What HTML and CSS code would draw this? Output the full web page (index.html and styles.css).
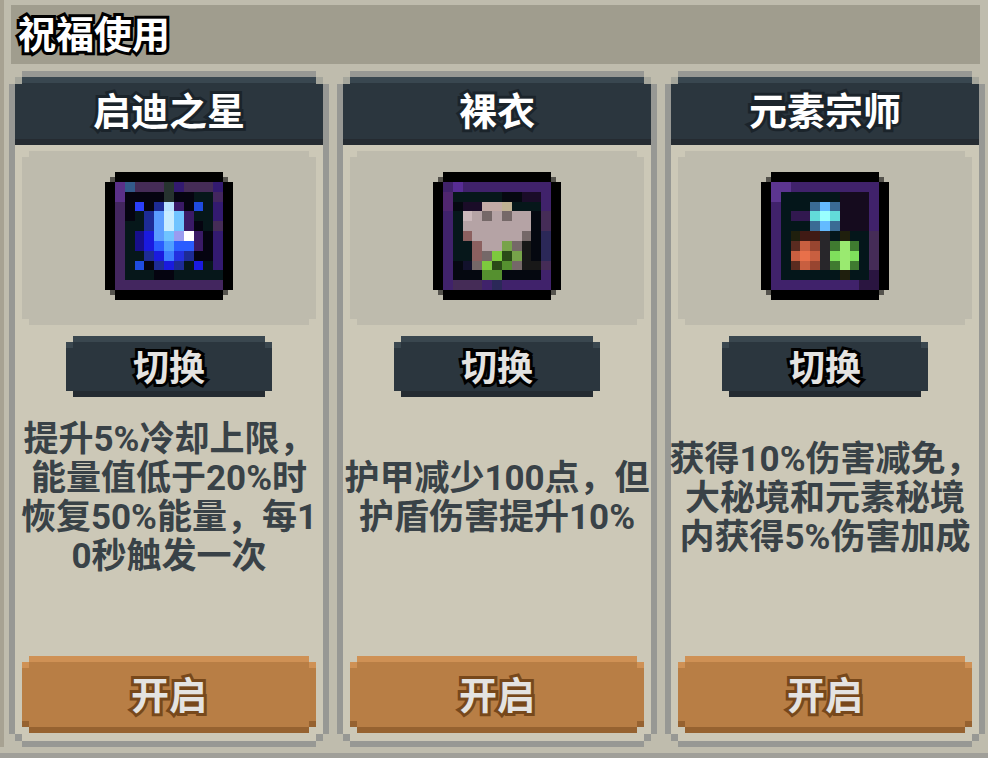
FILE: index.html
```html
<!DOCTYPE html>
<html lang="zh-CN">

<head>
	<meta charset="UTF-8">
	<meta name="viewport" content="width=device-width, initial-scale=1.0">
	<title>祝福使用</title>
	<link rel="stylesheet" href="styles.css">
</head>

<body>
	<main class="window">
		<div class="panel">
			<h1 class="panel-title">祝福使用</h1>

			<div class="cards">
				<section class="card">
					<h2 class="card-title">启迪之星</h2>
					<div class="card-icon">
						<svg viewBox="0 0 13 13" shape-rendering="crispEdges" aria-hidden="true">
							<path fill="#55534d" d="M.5.5h12v12H.5z"/>
							<path fill="#000" d="M1 0h11v1h1v11h-1v1H1v-1H0V1h1z"/>
							<path fill="#43265f" d="M1 1h11v11H1z"/>
							<path fill="#06171a" d="M2 2h9v9H2z"/>
							<path fill="#5a3088" d="M1 1h1v2H1z"/>
							<path fill="#335a8a" d="M2 1h1v1H2z"/>
							<path fill="#452c57" d="M3 1h3v1H3zM8 1h3v1H8zM11 5h1v1h-1z"/>
							<path fill="#26332f" d="M6 1h1v2H6z"/>
							<path fill="#331a70" d="M7 1h1v1H7zM11 1h1v1h-1zM11 3h1v2h-1zM11 6h1v4h-1z"/>
							<path fill="#050410" d="M2 2h4v1H2zM2 3h1v2H2zM4 3h1v1H4zM7 2h2v1H7zM8 3h1v1H8zM9 5h1v1H9zM10 6h1v3h-1zM9 8h1v1H9zM5 10h2v1H5zM4 9h1v1H4z"/>
							<path fill="#06171a" d="M11 10h1v1h-1z"/>
							<path fill="#2b3ffa" d="M3 3h1v1H3z"/>
							<path fill="#1f4be0" d="M9 3h1v1H9zM3 9h1v1H3z"/>
							<path fill="#1d2b95" d="M5 3h1v1H5zM4 4h1v2H4zM4 8h1v1H4zM8 8h1v1H8zM5 9h1v1H5zM7 9h1v1H7z"/>
							<path fill="#b8e2ff" d="M6 3h1v1H6z"/>
							<path fill="#c8ecff" d="M6 4h1v2H6z"/>
							<path fill="#3a1a66" d="M7 3h1v1H7zM8 4h1v2H8zM9 6h1v2H9z"/>
							<path fill="#5b9cff" d="M5 4h1v3H5z"/>
							<path fill="#6fc4ff" d="M7 4h1v2H7zM6 6h1v1H6z"/>
							<path fill="#170f8c" d="M3 6h1v2H3z"/>
							<path fill="#1a1adf" d="M4 6h1v2H4zM5 8h1v1H5zM6 9h1v1H6zM9 9h1v1H9z"/>
							<path fill="#9a9cf0" d="M7 6h1v1H7z"/>
							<path fill="#fff" d="M8 6h1v1H8z"/>
							<path fill="#2a5cff" d="M5 7h1v1H5zM7 7h2v1H7z"/>
							<path fill="#4fa0ff" d="M6 7h1v1H6z"/>
							<path fill="#3d80ff" d="M6 8h1v1H6z"/>
							<path fill="#2330e0" d="M7 8h1v1H7z"/>
						</svg>
					</div>
					<button class="btn btn-switch" type="button">切换</button>
					<p class="card-text">提升5%冷却上限，<br>能量值低于20%时<br>恢复50%能量，每1<br>0秒触发一次</p>
					<button class="btn btn-open" type="button">开启</button>
				</section>

				<section class="card">
					<h2 class="card-title">裸衣</h2>
					<div class="card-icon">
						<svg viewBox="0 0 13 13" shape-rendering="crispEdges" aria-hidden="true">
							<path fill="#55534d" d="M.5.5h12v12H.5z"/>
							<path fill="#000" d="M1 0h11v1h1v11h-1v1H1v-1H0V1h1z"/>
							<path fill="#40226b" d="M1 1h11v11H1z"/>
							<path fill="#050810" d="M2 2h9v9H2z"/>
							<path fill="#572c94" d="M2 1h1v1H2z"/>
							<path fill="#50266f" d="M1 2h1v2H1z"/>
							<path fill="#452c57" d="M11 4h1v2h-1zM2 11h3v1H2zM11 9h1v1h-1z"/>
							<path fill="#2b2858" d="M11 6h1v3h-1zM6 11h1v1H6z"/>
							<path fill="#06171a" d="M2 2h5v1H2zM2 4h1v5H2zM3 7h1v2H3zM8 3h3v1H8z"/>
							<path fill="#1a0c28" d="M3 3h2v1H3zM9 2h2v1H9z"/>
							<path fill="#181818" d="M9 7h1v3H9zM10 9h1v1h-1z"/>
							<path fill="#12112c" d="M3 9h1v1H3z"/>
							<path fill="#b5a3a5" d="M3 4h7v2H3zM4 6h5v1H4zM5 7h2v1H5z"/>
							<path fill="#c3aba6" d="M5 3h2v1H5z"/>
							<path fill="#c0b193" d="M7 3h1v1H7z"/>
							<path fill="#cbb8bb" d="M3 4h1v1H3z"/>
							<path fill="#756868" d="M5 4h1v1H5zM7 4h1v1H7zM9 6h1v1H9zM8 7h1v1H8zM5 8h1v1H5zM4 9h1v1H4zM8 9h1v1H8z"/>
							<path fill="#8b605f" d="M3 6h1v1H3zM4 7h1v2H4z"/>
							<path fill="#77a34a" d="M7 7h1v1H7zM8 8h1v1H8z"/>
							<path fill="#7dca3d" d="M6 8h1v1H6zM5 9h1v1H5z"/>
							<path fill="#2a4a18" d="M7 8h1v1H7zM6 9h1v1H6z"/>
							<path fill="#55902f" d="M7 9h1v1H7zM5 10h2v1H5z"/>
						</svg>
					</div>
					<button class="btn btn-switch" type="button">切换</button>
					<p class="card-text">护甲减少100点，但<br>护盾伤害提升10%</p>
					<button class="btn btn-open" type="button">开启</button>
				</section>

				<section class="card">
					<h2 class="card-title">元素宗师</h2>
					<div class="card-icon">
						<svg viewBox="0 0 13 13" shape-rendering="crispEdges" aria-hidden="true">
							<path fill="#55534d" d="M.5.5h12v12H.5z"/>
							<path fill="#000" d="M1 0h11v1h1v11h-1v1H1v-1H0V1h1z"/>
							<path fill="#40226b" d="M1 1h11v11H1z"/>
							<path fill="#04161a" d="M2 2h9v9H2z"/>
							<path fill="#5c3590" d="M1 1h2v1H2v1H1z"/>
							<path fill="#452c57" d="M11 6h1v4h-1z"/>
							<path fill="#2a1540" d="M11 10h1v1h-1zM10 11h2v1h-2z"/>
							<path fill="#150b1e" d="M8 2h3v4H8z"/>
							<path fill="#31184f" d="M3 4h2v1H3z"/>
							<path fill="#3a6b94" d="M5 3h3v3H5z"/>
							<path fill="#63bbff" d="M6 3h1v3H6z"/>
							<path fill="#62dcd9" d="M5 4h3v1H5z"/>
							<path fill="#99ffff" d="M6 4h1v1H6z"/>
							<path fill="#401a14" d="M4 6h2v1H4z"/>
							<path fill="#1f1f0d" d="M3 6h1v1H3zM8 6h1v1H8zM8 10h1v1H8z"/>
							<path fill="#28262a" d="M6 6h1v4H6z"/>
							<path fill="#5a2b20" d="M3 7h1v3H3z"/>
							<path fill="#984530" d="M5 7h1v3H5z"/>
							<path fill="#c85f40" d="M4 7h1v3H4zM3 8h3v1H3z"/>
							<path fill="#e8704a" d="M4 8h1v1H4z"/>
							<path fill="#3f7a30" d="M7 7h3v3H7z"/>
							<path fill="#7fe05c" d="M7 8h3v1H7z"/>
							<path fill="#9aea70" d="M8 7h1v3H8z"/>
						</svg>
					</div>
					<button class="btn btn-switch" type="button">切换</button>
					<p class="card-text">获得10%伤害减免，<br>大秘境和元素秘境<br>内获得5%伤害加成</p>
					<button class="btn btn-open" type="button">开启</button>
				</section>
			</div>
		</div>
	</main>
</body>

</html>
```
FILE: styles.css
```css
* {
	box-sizing: border-box;
}

body {
	margin: 0;
	background-color: #bfbcad;
	font-family: Roboto, "Noto Sans CJK SC", sans-serif;
	font-weight: 700;
}

h1,
h2,
p {
	margin: 0;
}

.window {
	padding-bottom: 6px;
	border-bottom: 5px solid #a09f99;
}

.panel {
	padding: 5px 3px 0 5px;
	border-left: 4px solid #a7a292;
}

.panel-title {
	margin: 0 5px 7px 2px;
	padding: 2px 0 0 7px;
	background-color: #a09d8e;
	color: #fff;
	font-size: 38px;
	line-height: 57px;
	-webkit-text-stroke: 6px #000;
	paint-order: stroke fill;
}

.cards {
	display: grid;
	grid-template-columns: repeat(3, minmax(0, 1fr));
	gap: 8px;
}

/* stepped pixel border: four bars, then the corner squares */
.card {
	display: flex;
	flex-direction: column;
	align-items: center;
	padding: 6px 6px 14px;
	background:
		linear-gradient(#979894, #979894) top / calc(100% - 26px) 6px,
		linear-gradient(#979894, #979894) bottom / calc(100% - 26px) 6px,
		linear-gradient(#979894, #979894) left / 6px calc(100% - 26px),
		linear-gradient(#979894, #979894) right / 6px calc(100% - 26px),
		linear-gradient(#979894, #979894) left 6px bottom 6px / 7px 7px,
		linear-gradient(#979894, #979894) right 6px bottom 6px / 7px 7px,
		linear-gradient(#a5a69c, #a5a69c) left 6px top 6px / 7px 7px,
		linear-gradient(#a5a69c, #a5a69c) right 6px top 6px / 7px 7px,
		linear-gradient(#ccc8b7, #ccc8b7) center / calc(100% - 12px) calc(100% - 12px);
	background-repeat: no-repeat;
}

.card-title {
	width: 100%;
	height: 68px;
	background: linear-gradient(#394750 6px, #2b363e 6px 62px, #252b31 62px);
	clip-path: polygon(7px 0, calc(100% - 7px) 0, calc(100% - 7px) 7px, 100% 7px, 100% 100%, 0 100%, 0 7px, 7px 7px);
	color: #fff;
	font-size: 38px;
	line-height: 70px;
	text-align: center;
	-webkit-text-stroke: 6px #1b242b;
	paint-order: stroke fill;
}

.card-icon,
.btn {
	clip-path: polygon(7px 0, calc(100% - 7px) 0, calc(100% - 7px) 6px, 100% 6px, 100% calc(100% - 6px), calc(100% - 7px) calc(100% - 6px), calc(100% - 7px) 100%, 7px 100%, 7px calc(100% - 6px), 0 calc(100% - 6px), 0 6px, 7px 6px);
}

.card-icon {
	align-self: stretch;
	margin: 6px 7px 11px;
	padding: 21px 0 25px;
	background-color: #bebbad;
}

.card-icon svg {
	display: block;
	width: 128px;
	height: 128px;
	margin: 0 auto;
}

/* light top edge and dark bottom edge, each stepping down at the corners */
.btn {
	padding: 0 0 4px;
	border: none;
	background:
		linear-gradient(var(--light), var(--light)) top / 100% 6px,
		linear-gradient(var(--light), var(--light)) left 0 top 6px / 7px 6px,
		linear-gradient(var(--light), var(--light)) right 0 top 6px / 7px 6px,
		linear-gradient(var(--dark), var(--dark)) bottom / 100% 6px,
		linear-gradient(var(--corner), var(--corner)) left 0 bottom 6px / 7px 6px,
		linear-gradient(var(--corner), var(--corner)) right 0 bottom 6px / 7px 6px,
		var(--face);
	background-repeat: no-repeat;
	color: #e4e3e1;
	font-family: inherit;
	font-weight: 700;
	cursor: pointer;
	paint-order: stroke fill;
}

.btn-switch {
	--light: #3a474f;
	--face: #2b363e;
	--corner: #2b363e;
	--dark: #242b31;
	width: 206px;
	height: 61px;
	font-size: 36px;
	-webkit-text-stroke: 6px #000;
}

.btn-open {
	--light: #cf9155;
	--face: #b87e45;
	--corner: #966230;
	--dark: #966230;
	align-self: stretch;
	height: 77px;
	margin: 0 7px;
	font-size: 38px;
	-webkit-text-stroke: 6px #77481b;
}

.card-text {
	display: flex;
	flex-direction: column;
	justify-content: center;
	min-height: 200px;
	margin-bottom: 59px;
	padding-top: 2px;
	color: #394247;
	font-size: 35px;
	line-height: 39px;
	text-align: center;
	white-space: nowrap;
}
```
